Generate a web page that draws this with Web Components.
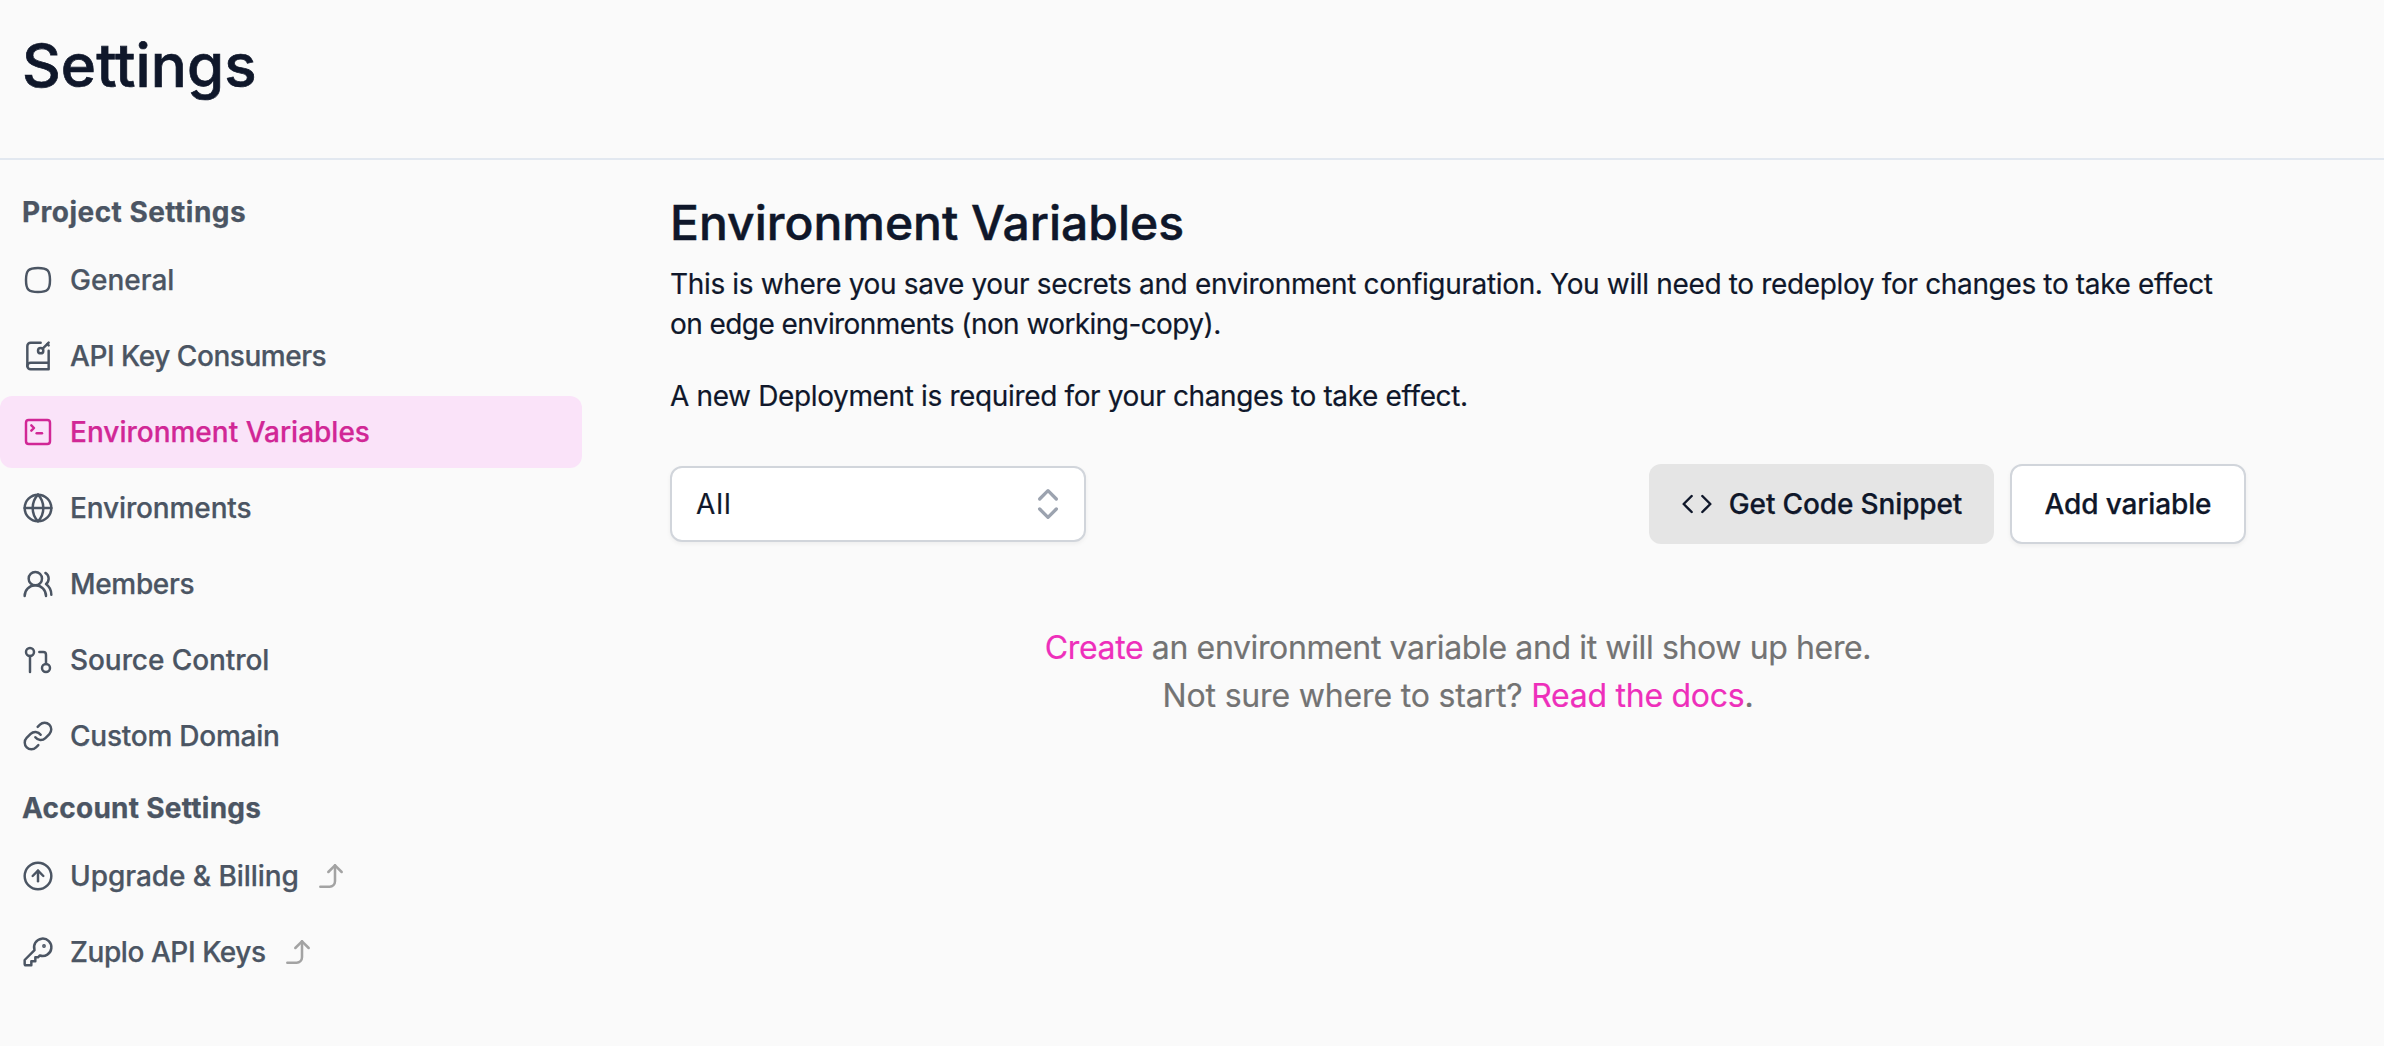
<!DOCTYPE html>
<html lang="en">
<head>
<meta charset="utf-8">
<title>Settings</title>
<style>
  html, body { margin: 0; height: 100%; background: #fafafa; }
  body { font-family: Inter, "Liberation Sans", sans-serif; font-size: 28px; line-height: 40px; color: #0f172a; overflow: hidden; }
</style>
</head>
<body>
<settings-page>
  <page-header slot="header">Settings</page-header>
  <nav-group slot="nav" label="Project Settings" style="--label-spacing:.47px">
    <nav-item icon="general">General</nav-item>
    <nav-item icon="consumers" style="--spacing:-.46px">API Key Consumers</nav-item>
    <nav-item icon="terminal" active>Environment Variables</nav-item>
    <nav-item icon="globe" style="--spacing:-.13px">Environments</nav-item>
    <nav-item icon="members" style="--spacing:-.33px">Members</nav-item>
    <nav-item icon="source" style="--spacing:-.07px">Source Control</nav-item>
    <nav-item icon="link" style="--spacing:-.24px">Custom Domain</nav-item>
  </nav-group>
  <nav-group slot="nav" label="Account Settings" style="--label-spacing:.26px">
    <nav-item icon="upgrade" external style="--spacing:-.05px">Upgrade &amp; Billing</nav-item>
    <nav-item icon="key" external style="--spacing:-.43px">Zuplo API Keys</nav-item>
  </nav-group>
  <env-variables></env-variables>
</settings-page>

<script>
const ICONS = {
  general: '<path d="M12 3c7.2 0 9 1.8 9 9s-1.8 9-9 9-9-1.8-9-9 1.8-9 9-9"/>',
  consumers: '<path d="M20 8v14H6.5a2.5 2.5 0 0 1 0-5H20"/><path d="M4 19.5v-15A2.5 2.5 0 0 1 6.5 2H14"/><circle cx="14" cy="8" r="2"/><path d="m20 2-4.5 4.5"/><path d="m19 3 1 1"/>',
  terminal: '<path d="m7 11 2-2-2-2"/><path d="M11 13h4"/><rect x="3" y="3" width="18" height="18" rx="2"/>',
  globe: '<circle cx="12" cy="12" r="10"/><path d="M12 2a14.5 14.5 0 0 0 0 20 14.5 14.5 0 0 0 0-20"/><path d="M2 12h20"/>',
  members: '<path d="M18 21a8 8 0 0 0-16 0"/><circle cx="10" cy="8" r="5"/><path d="M22 20c0-3.37-2-6.5-4-8a5 5 0 0 0-.45-8.3"/>',
  source: '<circle cx="18" cy="18" r="3"/><circle cx="6" cy="6" r="3"/><path d="M13 6h3a2 2 0 0 1 2 2v7"/><path d="M6 9v12"/>',
  link: '<path d="M10 13a5 5 0 0 0 7.54.54l3-3a5 5 0 0 0-7.07-7.07l-1.72 1.71"/><path d="M14 11a5 5 0 0 0-7.54-.54l-3 3a5 5 0 0 0 7.07 7.07l1.71-1.71"/>',
  upgrade: '<circle cx="12" cy="12" r="10"/><path d="m16 12-4-4-4 4"/><path d="M12 16V8"/>',
  key: '<path d="M2 18v3c0 .6.4 1 1 1h4v-3h3v-3h2l1.4-1.4a6.5 6.5 0 1 0-4-4Z"/><circle cx="16.5" cy="7.5" r=".5" fill="currentColor"/>',
  external: '<path d="m10 9 5-5 5 5"/><path d="M4 20h7a4 4 0 0 0 4-4V4"/>',
  code: '<path d="m16 18 6-6-6-6"/><path d="m8 6-6 6 6 6"/>',
  sort: '<path d="m7 15 5 5 5-5"/><path d="m7 9 5-5 5 5"/>'
};

class UiElement extends HTMLElement {
  connectedCallback() {
    if (!this.shadowRoot) this.attachShadow({ mode: 'open' }).innerHTML = this.render();
  }
}

customElements.define('ui-icon', class extends UiElement {
  render() {
    return `<style>
      :host { display: block; flex: none; width: var(--size, 32px); height: var(--size, 32px); }
      svg { display: block; width: 100%; height: 100%; overflow: visible; fill: none; stroke: currentColor; stroke-width: var(--stroke, 1.85); stroke-linecap: round; stroke-linejoin: round; }
    </style><svg viewBox="0 0 24 24" aria-hidden="true">${ICONS[this.getAttribute('name')]}</svg>`;
  }
});

customElements.define('settings-page', class extends UiElement {
  render() {
    return `<style>
      :host { display: flex; flex-direction: column; height: 100%; }
      .body { display: flex; gap: 88px; padding-top: 32px; }
      nav { display: flex; flex-direction: column; gap: 16px; width: 582px; }
      main { width: 1576px; padding-top: 3px; }
    </style>
    <slot name="header"></slot>
    <div class="body"><nav><slot name="nav"></slot></nav><main><slot></slot></main></div>`;
  }
});

customElements.define('page-header', class extends UiElement {
  render() {
    return `<style>
      :host { display: block; box-sizing: border-box; height: 160px; padding: 29px 22px 0; border-bottom: 2px solid #e2e8f0; }
      h1 { margin: 0; font-size: 60px; line-height: 72px; font-weight: 500; letter-spacing: .1px; -webkit-text-stroke: .7px currentColor; }
    </style><h1><slot></slot></h1>`;
  }
});

customElements.define('nav-group', class extends UiElement {
  render() {
    return `<style>
      :host { display: block; color: #4b5563; }
      h2 { margin: 0 0 12px; padding-left: 22px; font-size: 28px; line-height: 40px; font-weight: 700; letter-spacing: var(--label-spacing, 0); -webkit-text-stroke: .25px currentColor; }
      div { display: flex; flex-direction: column; gap: 4px; }
    </style><h2>${this.getAttribute('label')}</h2><div><slot></slot></div>`;
  }
});

customElements.define('nav-item', class extends UiElement {
  render() {
    return `<style>
      :host { display: flex; align-items: center; height: 72px; box-sizing: border-box; padding-left: 22px; border-radius: 12px; font-weight: 500; -webkit-text-stroke: .25px currentColor; }
      :host([active]) { background: #fae3f9; color: #d12796; }
      .label { margin-left: 16px; letter-spacing: var(--spacing, 0); }
      .ext { margin-left: 16px; color: #a3a3a3; --stroke: 1.9; }
    </style><ui-icon name="${this.getAttribute('icon')}"></ui-icon><span class="label"><slot></slot></span>
    ${this.hasAttribute('external') ? '<ui-icon class="ext" name="external"></ui-icon>' : ''}`;
  }
});

customElements.define('ui-select', class extends UiElement {
  render() {
    return `<style>
      :host { display: flex; align-items: center; justify-content: space-between; box-sizing: border-box; width: 416px; height: 76px; padding: 0 16px 0 24px;
        background: #fff; border: 2px solid #d1d5db; border-radius: 12px; box-shadow: 0 2px 4px rgba(0,0,0,.05); }
      span { letter-spacing: .95px; }
      ui-icon { --size: 40px; --stroke: 2; color: #9ca3af; }
    </style><span><slot></slot></span><ui-icon name="sort"></ui-icon>`;
  }
});

customElements.define('ui-button', class extends UiElement {
  render() {
    const icon = this.getAttribute('icon');
    return `<style>
      :host { display: flex; align-items: center; justify-content: center; box-sizing: border-box; height: 80px; border-radius: 12px; font-weight: 500; letter-spacing: -.14px; -webkit-text-stroke: .25px currentColor;
        background: #fff; border: 2px solid #d1d5db; box-shadow: 0 2px 4px rgba(0,0,0,.05); width: 236px; }
      :host([variant="muted"]) { background: #e5e5e5; border: 0; box-shadow: none; width: 345px; }
      ui-icon { margin-right: 16px; }
    </style>${icon ? `<ui-icon name="${icon}"></ui-icon>` : ''}<slot></slot>`;
  }
});

customElements.define('env-variables', class extends UiElement {
  render() {
    return `<style>
      :host { display: block; -webkit-text-stroke: .2px currentColor; }
      h2 { margin: 0 0 13px; font-size: 48px; line-height: 56px; font-weight: 500; letter-spacing: 0; -webkit-text-stroke: .5px currentColor; }
      p { margin: 0; white-space: nowrap; letter-spacing: -.345px; }
      .second { letter-spacing: -.575px; }
      .note { margin-top: 32px; letter-spacing: -.362px; }
      .bar { display: flex; align-items: center; gap: 16px; height: 80px; margin-top: 48px; }
      .bar ui-select { margin-right: auto; }
      .empty { margin-top: 80px; font-size: 32px; line-height: 48px; text-align: center; color: #737373; letter-spacing: -.375px; }
      .empty .hint { letter-spacing: -.17px; }
      a { color: #ee2fbb; text-decoration: none; }
      .hint a { letter-spacing: -.27px; }
    </style>
    <h2>Environment Variables</h2>
    <p>This is where you save your secrets and environment configuration. You will need to redeploy for changes to take effect</p>
    <p class="second">on edge environments (non working-copy).</p>
    <p class="note">A new Deployment is required for your changes to take effect.</p>
    <div class="bar">
      <ui-select>All</ui-select>
      <ui-button variant="muted" icon="code">Get Code Snippet</ui-button>
      <ui-button>Add variable</ui-button>
    </div>
    <div class="empty">
      <div><a>Create</a> an environment variable and it will show up here.</div>
      <div class="hint">Not sure where to start? <a>Read the docs</a>.</div>
    </div>`;
  }
});
</script>
</body>
</html>
